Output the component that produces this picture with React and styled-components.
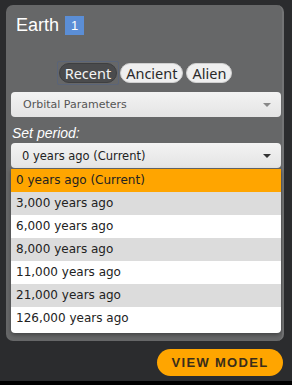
import React from "react";
import styled, { createGlobalStyle } from "styled-components";

const Global = createGlobalStyle`
  html, body { margin: 0; padding: 0; background: #2b2c2e; }
  body { width: 292px; height: 385px; overflow: hidden; font-family: "Liberation Sans", Arial, sans-serif; }
`;

const Page = styled.div`
  width: 292px;
  height: 385px;
  display: flex;
  flex-direction: column;
  background: #2b2c2e;
  border-bottom: 4px solid #000;
  box-sizing: border-box;
`;

const Panel = styled.div`
  margin: 5px 8px 0 6px;
  height: 336px;
  box-sizing: border-box;
  background: #666768;
  border-radius: 7px;
  border-right: 2px solid #737475;
  padding: 10px 2px 0 5px;
  display: flex;
  flex-direction: column;
`;

const TitleRow = styled.div`
  display: flex;
  align-items: center;
  gap: 6px;
  padding-left: 5px;
  height: 20px;
`;

const Title = styled.span`
  color: #fff;
  font-size: 18px;
  line-height: 20px;
`;

const Badge = styled.span`
  display: inline-flex;
  align-items: center;
  justify-content: center;
  width: 19px;
  height: 19px;
  background: #5b8ed6;
  color: #fff;
  font-size: 13px;
`;

const Tabs = styled.div`
  display: flex;
  justify-content: center;
  align-items: center;
  gap: 3px;
  margin-top: 26px;
`;

const Focus = styled.span`
  display: inline-flex;
  padding: 1px;
  border: 1px solid #5a6478;
  border-radius: 2px;
  margin: 0 -2px;
`;

const Tab = styled.button`
  font-family: "Noto Sans", sans-serif;
  font-size: 14.5px;
  line-height: 17px;
  height: 20px;
  padding: 0 5px;
  border-radius: 10px;
  border: 1px solid ${(p) => (p.$active ? "#3e3f41" : "#cfcfcf")};
  background: ${(p) => (p.$active ? "#4a4b4d" : "#efefef")};
  color: ${(p) => (p.$active ? "#f4f4f4" : "#2a2a2a")};
  outline: none;
  cursor: pointer;
`;

const Select = styled.div`
  margin-top: ${(p) => p.$mt}px;
  width: 270px;
  height: 25px;
  box-sizing: border-box;
  border-radius: 4px;
  background: linear-gradient(#f3f3f3, #e4e4e4);
  display: flex;
  align-items: center;
  justify-content: space-between;
  padding: 0 10px 0 ${(p) => p.$pl}px;
  font-family: "DejaVu Sans", Verdana, sans-serif;
  font-size: ${(p) => p.$fs}px;
  color: ${(p) => p.$color};
`;

const Arrow = styled.span`
  width: 0;
  height: 0;
  border-left: 4px solid transparent;
  border-right: 4px solid transparent;
  border-top: 4px solid ${(p) => p.$color};
`;

const Label = styled.div`
  margin-top: 8px;
  padding-left: 1px;
  color: #fff;
  font-style: italic;
  font-size: 14px;
  line-height: 17px;
`;

const List = styled.ul`
  list-style: none;
  margin: 1px 0 0 0;
  padding: 0 0 3px 0;
  width: 270px;
  background: #fff;
  border-radius: 0 0 4px 4px;
  box-shadow: 0 2px 4px rgba(0, 0, 0, 0.35);
`;

const Item = styled.li`
  height: 23px;
  line-height: 23px;
  padding-left: 5px;
  font-family: "DejaVu Sans", Verdana, sans-serif;
  font-size: 12px;
  color: #222;
  background: ${(p) => (p.$selected ? "#ffa500" : p.$odd ? "#dcdcdc" : "#fff")};
`;

const Footer = styled.div`
  flex: 1;
  display: flex;
  justify-content: flex-end;
  align-items: flex-start;
  padding: 8px 9px 0 0;
`;

const ViewButton = styled.button`
  width: 126px;
  height: 27px;
  border: none;
  border-radius: 14px;
  background: #ffa500;
  color: #3a2d1a;
  font-family: "Liberation Sans", Arial, sans-serif;
  font-weight: bold;
  font-size: 13px;
  letter-spacing: 1.3px;
  cursor: pointer;
`;

const periods = [
  "0 years ago (Current)",
  "3,000 years ago",
  "6,000 years ago",
  "8,000 years ago",
  "11,000 years ago",
  "21,000 years ago",
  "126,000 years ago",
];

export default function App() {
  return (
    <>
      <Global />
      <Page>
        <Panel>
          <TitleRow>
            <Title>Earth</Title>
            <Badge>1</Badge>
          </TitleRow>
          <Tabs>
            <Focus>
              <Tab $active>Recent</Tab>
            </Focus>
            <Tab>Ancient</Tab>
            <Tab>Alien</Tab>
          </Tabs>
          <Select $mt={7} $pl={12} $fs={11} $color="#555">
            <span>Orbital Parameters</span>
            <Arrow $color="#888" />
          </Select>
          <Label>Set period:</Label>
          <Select $mt={1} $pl={11} $fs={11.5} $color="#222">
            <span>0 years ago (Current)</span>
            <Arrow $color="#333" />
          </Select>
          <List>
            {periods.map((p, i) => (
              <Item key={p} $selected={i === 0} $odd={i % 2 === 1}>
                {p}
              </Item>
            ))}
          </List>
        </Panel>
        <Footer>
          <ViewButton>VIEW MODEL</ViewButton>
        </Footer>
      </Page>
    </>
  );
}
